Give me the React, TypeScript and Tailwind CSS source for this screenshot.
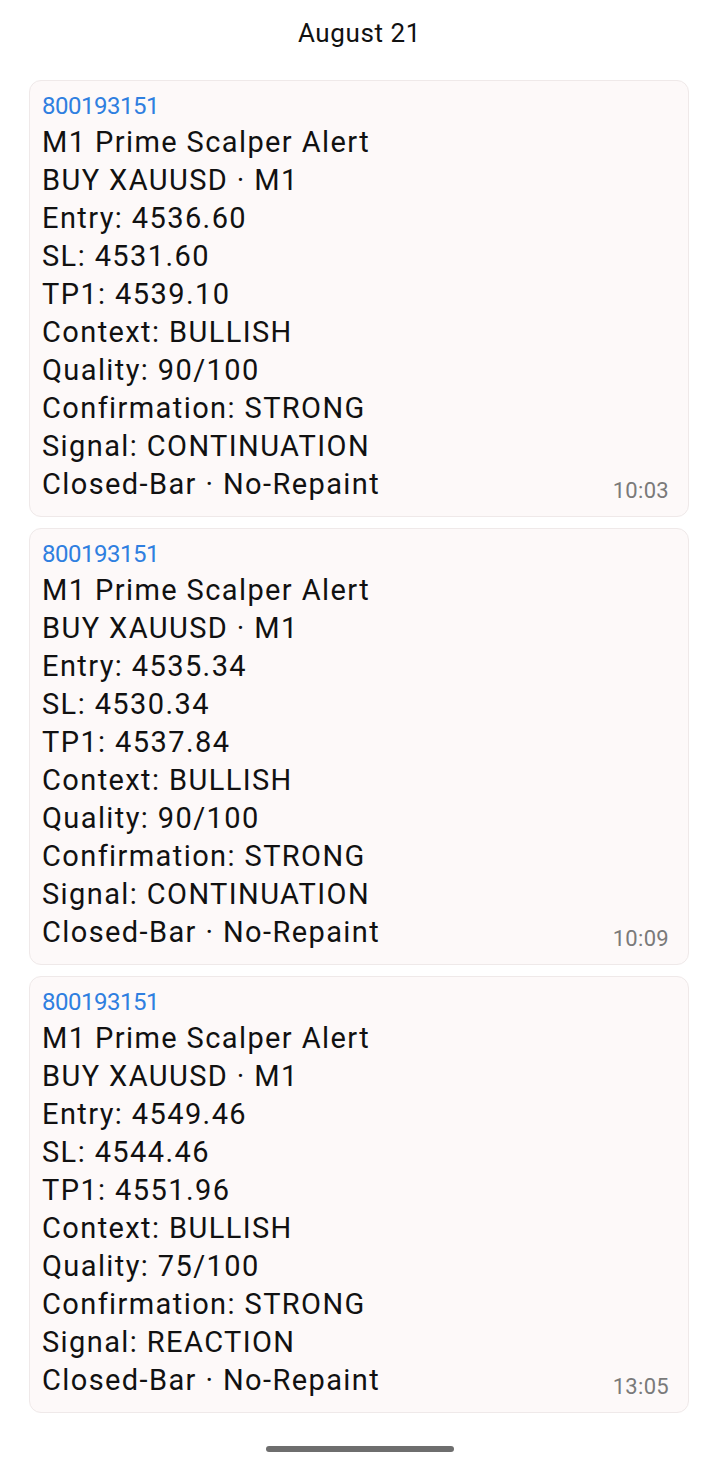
const alerts = [
  {
    entry: "4536.60",
    sl: "4531.60",
    tp: "4539.10",
    quality: "90/100",
    signal: "CONTINUATION",
    time: "10:03",
  },
  {
    entry: "4535.34",
    sl: "4530.34",
    tp: "4537.84",
    quality: "90/100",
    signal: "CONTINUATION",
    time: "10:09",
  },
  {
    entry: "4549.46",
    sl: "4544.46",
    tp: "4551.96",
    quality: "75/100",
    signal: "REACTION",
    time: "13:05",
  },
];

function AlertCard({ a }: { a: (typeof alerts)[number] }) {
  const lines = [
    "M1 Prime Scalper Alert",
    "BUY XAUUSD · M1",
    `Entry: ${a.entry}`,
    `SL: ${a.sl}`,
    `TP1: ${a.tp}`,
    "Context: BULLISH",
    `Quality: ${a.quality}`,
    "Confirmation: STRONG",
    `Signal: ${a.signal}`,
  ];
  return (
    <div className="rounded-[12px] border border-[#efe9e9] bg-[#fdf9f9] pl-[12px] pr-[19px] pt-[8px] pb-[13px]">
      <div className="text-[24px] leading-[34px] tracking-[-0.5px] text-[#2f7fe0]">800193151</div>
      <div className="text-[29px] leading-[38px] tracking-[1.4px] text-[#111]">
        {lines.map((l) => (
          <div key={l}>{l}</div>
        ))}
        <div className="flex items-end justify-between">
          <span>Closed-Bar · No-Repaint</span>
          <span className="text-[22px] leading-[30px] tracking-[0.3px] text-[#7a7a7a] translate-y-[3px]">
            {a.time}
          </span>
        </div>
      </div>
    </div>
  );
}

export default function App() {
  return (
    <div className="min-h-[1471px] bg-white font-['Roboto',sans-serif] flex flex-col">
      <div className="pt-[16px] text-center text-[26px] leading-[34px] tracking-[0.6px] text-[#111]">
        August 21
      </div>
      <div className="mt-[30px] px-[29px] pr-[30px] flex flex-col gap-[11px]">
        {alerts.map((a) => (
          <AlertCard key={a.time} a={a} />
        ))}
      </div>
      <div className="mt-[33px] flex justify-center">
        <div className="h-[6px] w-[188px] rounded-full bg-[#6e6e6e]" />
      </div>
    </div>
  );
}
